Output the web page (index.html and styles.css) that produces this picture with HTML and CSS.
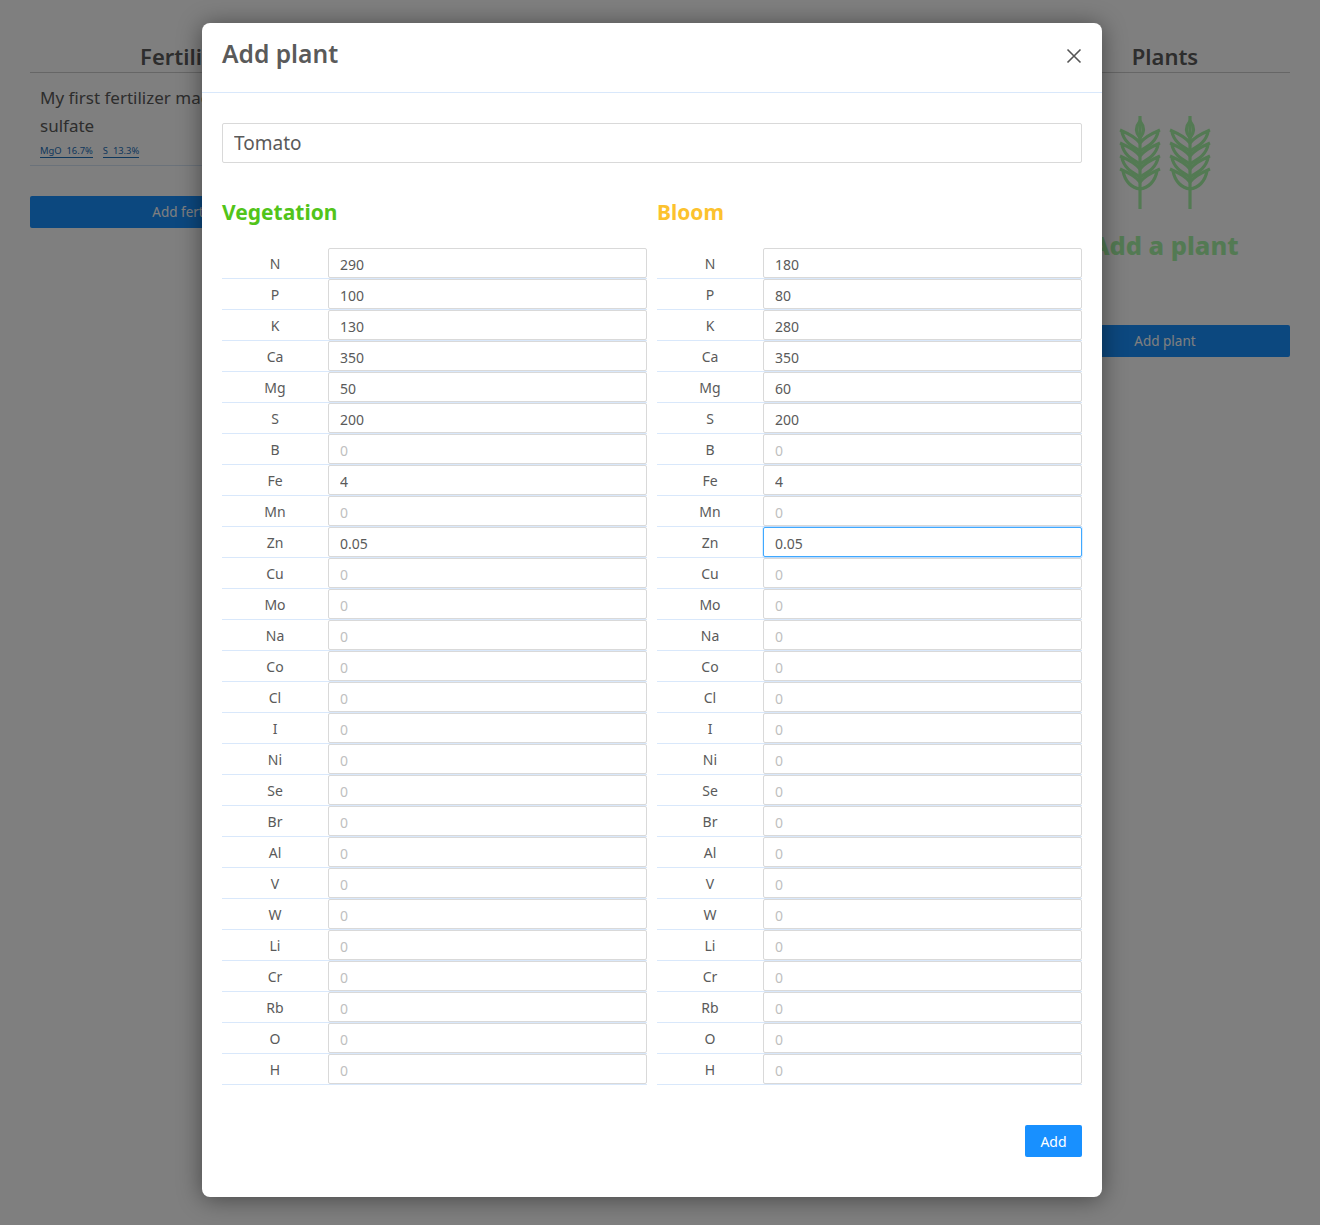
FILE: index.html
```html
<!DOCTYPE html>
<html>
<head>
	<meta charset="utf-8">
	<title>Add plant</title>
	<link rel="stylesheet" href="styles.css">
</head>
<body>
	<div class="page">
		<div class="col col-fert">
			<h3 class="col-title">Fertilizers</h3>
			<div class="fert-item">
				<div class="fert-name">My first fertilizer magnesium<br>sulfate</div>
				<div class="fert-tags"><a class="tag">MgO&nbsp; 16.7%</a><a class="tag">S&nbsp; 13.3%</a></div>
			</div>
			<button class="wide-btn">Add fertilizer</button>
		</div>
		<div class="col col-plants">
			<h3 class="col-title">Plants</h3>
			<div class="empty">
				<svg class="wheat" width="110" height="105" viewBox="0 0 110 105" fill="none" stroke="#a6f5a6" stroke-width="3.2">
					<defs>
						<g id="stalk">
							<path d="M30 6V99"/>
							<path d="M30 11C26 16 25 22 30 28C35 22 34 16 30 11Z"/>
							<path d="M10 20C17 23 25 26 30 33C35 26 43 23 50 20M12 22C14 32 22 36 30 41C38 36 46 32 48 22"/>
							<path d="M10 33C17 36 25 39 30 46C35 39 43 36 50 33M12 35C14 45 22 49 30 54C38 49 46 45 48 35"/>
							<path d="M10 46C17 49 25 52 30 59C35 52 43 49 50 46M12 48C14 58 22 62 30 67C38 62 46 58 48 48"/>
							<path d="M10 59C17 62 25 65 30 72C35 65 43 62 50 59M13 61C15 72 22 78 30 79C38 78 45 72 47 61"/>
						</g>
					</defs>
					<use href="#stalk"/>
					<use href="#stalk" x="50"/>
				</svg>
				<div class="empty-text">Add a plant</div>
			</div>
			<button class="wide-btn">Add plant</button>
		</div>
	</div>

	<div class="overlay"></div>

	<div class="modal">
		<div class="modal-head">
			<h2 class="modal-title">Add plant</h2>
			<svg class="close" width="16" height="16" viewBox="0 0 16 16" stroke="#555" stroke-width="1.6" fill="none"><path d="M1.5 1.5L14.5 14.5M14.5 1.5L1.5 14.5"/></svg>
		</div>
		<div class="modal-body">
			<input class="name-input" type="text" value="Tomato">
			<div class="phases">
				<div class="phase">
					<h3 class="phase-title veg">Vegetation</h3>
					<table class="elements">
						<tr><td>N</td><td><input value="290"></td></tr>
						<tr><td>P</td><td><input value="100"></td></tr>
						<tr><td>K</td><td><input value="130"></td></tr>
						<tr><td>Ca</td><td><input value="350"></td></tr>
						<tr><td>Mg</td><td><input value="50"></td></tr>
						<tr><td>S</td><td><input value="200"></td></tr>
						<tr><td>B</td><td><input placeholder="0"></td></tr>
						<tr><td>Fe</td><td><input value="4"></td></tr>
						<tr><td>Mn</td><td><input placeholder="0"></td></tr>
						<tr><td>Zn</td><td><input value="0.05"></td></tr>
						<tr><td>Cu</td><td><input placeholder="0"></td></tr>
						<tr><td>Mo</td><td><input placeholder="0"></td></tr>
						<tr><td>Na</td><td><input placeholder="0"></td></tr>
						<tr><td>Co</td><td><input placeholder="0"></td></tr>
						<tr><td>Cl</td><td><input placeholder="0"></td></tr>
						<tr><td>I</td><td><input placeholder="0"></td></tr>
						<tr><td>Ni</td><td><input placeholder="0"></td></tr>
						<tr><td>Se</td><td><input placeholder="0"></td></tr>
						<tr><td>Br</td><td><input placeholder="0"></td></tr>
						<tr><td>Al</td><td><input placeholder="0"></td></tr>
						<tr><td>V</td><td><input placeholder="0"></td></tr>
						<tr><td>W</td><td><input placeholder="0"></td></tr>
						<tr><td>Li</td><td><input placeholder="0"></td></tr>
						<tr><td>Cr</td><td><input placeholder="0"></td></tr>
						<tr><td>Rb</td><td><input placeholder="0"></td></tr>
						<tr><td>O</td><td><input placeholder="0"></td></tr>
						<tr><td>H</td><td><input placeholder="0"></td></tr>
					</table>
				</div>
				<div class="phase">
					<h3 class="phase-title bloom">Bloom</h3>
					<table class="elements">
						<tr><td>N</td><td><input value="180"></td></tr>
						<tr><td>P</td><td><input value="80"></td></tr>
						<tr><td>K</td><td><input value="280"></td></tr>
						<tr><td>Ca</td><td><input value="350"></td></tr>
						<tr><td>Mg</td><td><input value="60"></td></tr>
						<tr><td>S</td><td><input value="200"></td></tr>
						<tr><td>B</td><td><input placeholder="0"></td></tr>
						<tr><td>Fe</td><td><input value="4"></td></tr>
						<tr><td>Mn</td><td><input placeholder="0"></td></tr>
						<tr><td>Zn</td><td><input class="active" value="0.05"></td></tr>
						<tr><td>Cu</td><td><input placeholder="0"></td></tr>
						<tr><td>Mo</td><td><input placeholder="0"></td></tr>
						<tr><td>Na</td><td><input placeholder="0"></td></tr>
						<tr><td>Co</td><td><input placeholder="0"></td></tr>
						<tr><td>Cl</td><td><input placeholder="0"></td></tr>
						<tr><td>I</td><td><input placeholder="0"></td></tr>
						<tr><td>Ni</td><td><input placeholder="0"></td></tr>
						<tr><td>Se</td><td><input placeholder="0"></td></tr>
						<tr><td>Br</td><td><input placeholder="0"></td></tr>
						<tr><td>Al</td><td><input placeholder="0"></td></tr>
						<tr><td>V</td><td><input placeholder="0"></td></tr>
						<tr><td>W</td><td><input placeholder="0"></td></tr>
						<tr><td>Li</td><td><input placeholder="0"></td></tr>
						<tr><td>Cr</td><td><input placeholder="0"></td></tr>
						<tr><td>Rb</td><td><input placeholder="0"></td></tr>
						<tr><td>O</td><td><input placeholder="0"></td></tr>
						<tr><td>H</td><td><input placeholder="0"></td></tr>
					</table>
				</div>
			</div>
			<div class="modal-foot"><button class="add-btn">Add</button></div>
		</div>
	</div>
</body>
</html>
```

FILE: styles.css
```css
html, body {
	margin: 0;
	height: 1225px;
	overflow: hidden;
}
body {
	background: #fff;
	color: #5a5a5a;
	font-family: "Noto Sans", sans-serif;
}
.page {
	display: flex;
	justify-content: space-between;
	padding: 40px 30px 0;
}
.col-fert {
	width: 326px;
}
.col-plants {
	width: 250px;
}
.col-title {
	margin: 0;
	height: 32px;
	line-height: 33px;
	font-size: 22px;
	font-weight: 600;
	text-align: center;
	border-bottom: 1px solid #ccc;
}
.fert-item {
	padding: 11px 10px 7px;
	border-bottom: 1px solid #d6e4f5;
}
.fert-name {
	font-size: 17px;
	line-height: 28px;
	white-space: nowrap;
}
.fert-tags {
	display: flex;
	gap: 10px;
	margin-top: 5px;
	font-size: 9.4px;
	line-height: 12px;
}
.tag {
	color: #1d6fb8;
	border-bottom: 1px solid #1d6fb8;
}
.wide-btn {
	display: block;
	width: 100%;
	height: 32px;
	margin-top: 30px;
	border: 0;
	border-radius: 2px;
	background: #1890ff;
	color: #fff;
	font: 13.5px "Noto Sans", sans-serif;
}
.col-plants .wide-btn {
	margin-top: 62px;
}
.empty {
	padding-top: 37px;
	text-align: center;
}
.wheat {
	display: block;
	margin: 0 auto;
}
.empty-text {
	margin-top: 12px;
	font-size: 25.5px;
	line-height: 36px;
	font-weight: 800;
	color: #a6f5a6;
}

.overlay {
	position: absolute;
	left: 0;
	top: 0;
	width: 100%;
	height: 100%;
	background: rgba(0, 0, 0, .5);
}
.modal {
	position: absolute;
	left: 202px;
	top: 23px;
	width: 900px;
	height: 1174px;
	background: #fff;
	border-radius: 8px;
	box-shadow: 0 2px 24px rgba(0, 0, 0, .45);
}
.modal-head {
	display: flex;
	justify-content: space-between;
	align-items: center;
	height: 69px;
	padding: 0 20px;
	border-bottom: 1px solid #d9e8fb;
}
.modal-title {
	margin: 0 0 8px;
	font-size: 24.6px;
	line-height: 32px;
	font-weight: 600;
}
.close {
	display: block;
	margin-bottom: 4px;
}
.modal-body {
	padding: 30px 20px 0;
}
.name-input {
	display: block;
	box-sizing: border-box;
	width: 100%;
	height: 40px;
	padding: 0 11px;
	border: 1px solid #d9d9d9;
	border-radius: 2px;
	color: #5a5a5a;
	font: 19px "Noto Sans", sans-serif;
	outline: 0;
}
.phases {
	display: flex;
	gap: 10px;
	margin-top: 33px;
}
.phase {
	flex: 1;
}
.phase-title {
	margin: 0 0 19px;
	font-size: 21px;
	line-height: 33px;
	font-weight: 700;
}
.veg {
	color: #52c41a;
}
.bloom {
	color: #fcc22e;
}
.elements {
	width: 100%;
	border-collapse: separate;
	border-spacing: 0;
	table-layout: fixed;
}
.elements td {
	height: 30px;
	padding: 0;
	font-size: 14px;
	text-align: center;
	border-bottom: 1px solid #d9e8fb;
}
.elements td:first-child {
	width: 106px;
}
.elements input {
	display: block;
	box-sizing: border-box;
	width: 100%;
	height: 30px;
	padding: 3px 11px 0;
	border: 1px solid #d9d9d9;
	border-radius: 2px;
	color: #5a5a5a;
	font: 14px "Noto Sans", sans-serif;
	outline: 0;
}
.elements input::placeholder {
	color: #bfbfbf;
}
.elements input.active {
	border-color: #40a9ff;
	box-shadow: 0 0 0 1px rgba(24, 144, 255, .15);
}
.modal-foot {
	display: flex;
	justify-content: flex-end;
	margin-top: 40px;
}
.add-btn {
	width: 57px;
	height: 32px;
	border: 0;
	border-radius: 2px;
	background: #1890ff;
	color: #fff;
	font: 14px "Noto Sans", sans-serif;
}
```
